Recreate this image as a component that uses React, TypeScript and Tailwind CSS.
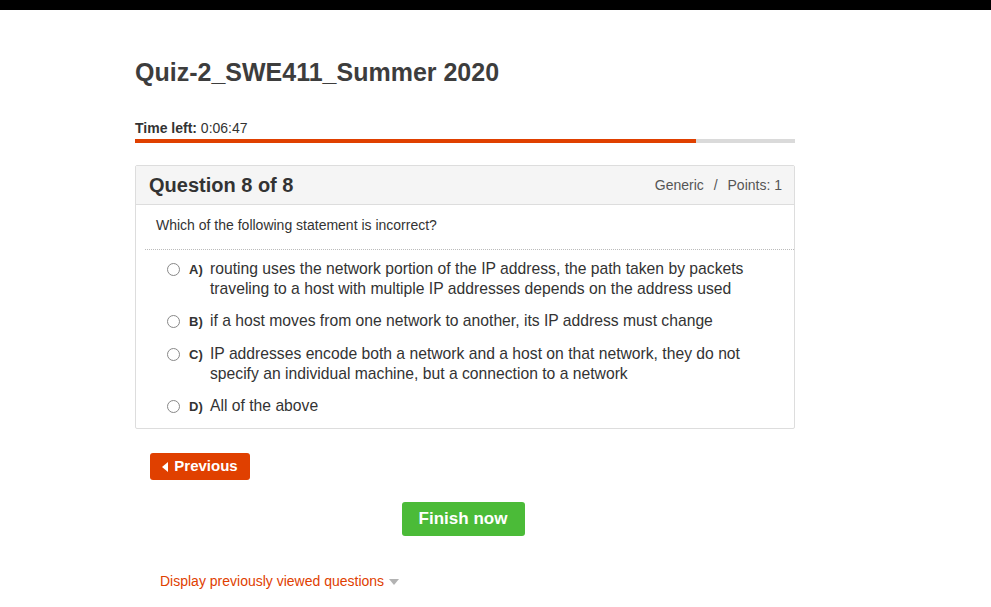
const options = [
  {
    key: "A)",
    text: "routing uses the network portion of the IP address, the path taken by packets traveling to a host with multiple IP addresses depends on the address used",
  },
  { key: "B)", text: "if a host moves from one network to another, its IP address must change" },
  {
    key: "C)",
    text: "IP addresses encode both a network and a host on that network, they do not specify an individual machine, but a connection to a network",
  },
  { key: "D)", text: "All of the above" },
];

const App = () => {
  return (
    <div className="min-h-screen bg-white font-['Liberation_Sans',Arial,sans-serif] text-[#333]">
      <div className="h-[10px] bg-black"></div>
      <div className="ml-[135px] w-[660px]">
        <h1 className="mt-[47px] text-[25px] font-bold leading-[30px] text-[#3d3d3d]">
          Quiz-2_SWE411_Summer 2020
        </h1>
        <div className="mt-[33px] text-[14px] leading-[16px] text-[#333]">
          <span className="font-bold">Time left:</span> 0:06:47
        </div>
        <div className="mt-[3px] flex h-[4px] bg-[#dadada]">
          <div className="h-full w-[561px] bg-[#e04000]"></div>
        </div>

        <div className="mt-[22px] rounded-[2px] border border-[#ddd]">
          <div className="flex h-[39px] items-center justify-between border-b border-[#ddd] bg-[#f5f5f5] pl-[13px] pr-[12px]">
            <span className="text-[20px] font-bold text-[#333]">Question 8 of 8</span>
            <span className="text-[14px] text-[#555]">
              Generic <span className="mx-[6px]">/</span> Points: 1
            </span>
          </div>
          <div className="px-[20px] pt-[12px] pb-[16px] text-[14px] leading-[16px] text-[#333]">
            Which of the following statement is incorrect?
          </div>
          <div className="ml-[9px] border-t border-dotted border-[#bbb]"></div>
          <div className="pl-[31px] pr-[20px] pt-[9px] pb-[11px]">
            {options.map((o) => (
              <label key={o.key} className="mb-[12px] flex items-start last:mb-0">
                <span className="mt-[4px] h-[13px] w-[13px] shrink-0 rounded-full border border-[#888] bg-white"></span>
                <span className="ml-[9px] mt-[1px] w-[21px] shrink-0 text-[13px] font-bold leading-[20px]">
                  {o.key}
                </span>
                <span className="text-[15.7px] leading-[20px] text-[#333]">{o.text}</span>
              </label>
            ))}
          </div>
        </div>

        <div className="mt-[24px] pl-[15px]">
          <button className="flex h-[27px] w-[100px] items-center justify-center rounded-[3px] bg-[#e04000] text-[15px] font-bold text-white">
            <svg width="6" height="10" viewBox="0 0 6 10" className="mr-[6px]">
              <path d="M6 0 L0 5 L6 10 Z" fill="white" />
            </svg>
            Previous
          </button>
        </div>

        <div className="mt-[22px] flex justify-center">
          <button className="mr-[4px] h-[34px] w-[123px] rounded-[3px] bg-[#4bbb38] text-[17px] font-bold text-white">
            Finish now
          </button>
        </div>

        <div className="mt-[35px] flex items-center pl-[25px] text-[14px] text-[#e04000]">
          Display previously viewed questions
          <svg width="10" height="6" viewBox="0 0 10 6" className="ml-[5px]">
            <path d="M0 0 L10 0 L5 6 Z" fill="#b3b3b3" />
          </svg>
        </div>
      </div>
    </div>
  );
};

export default App;
